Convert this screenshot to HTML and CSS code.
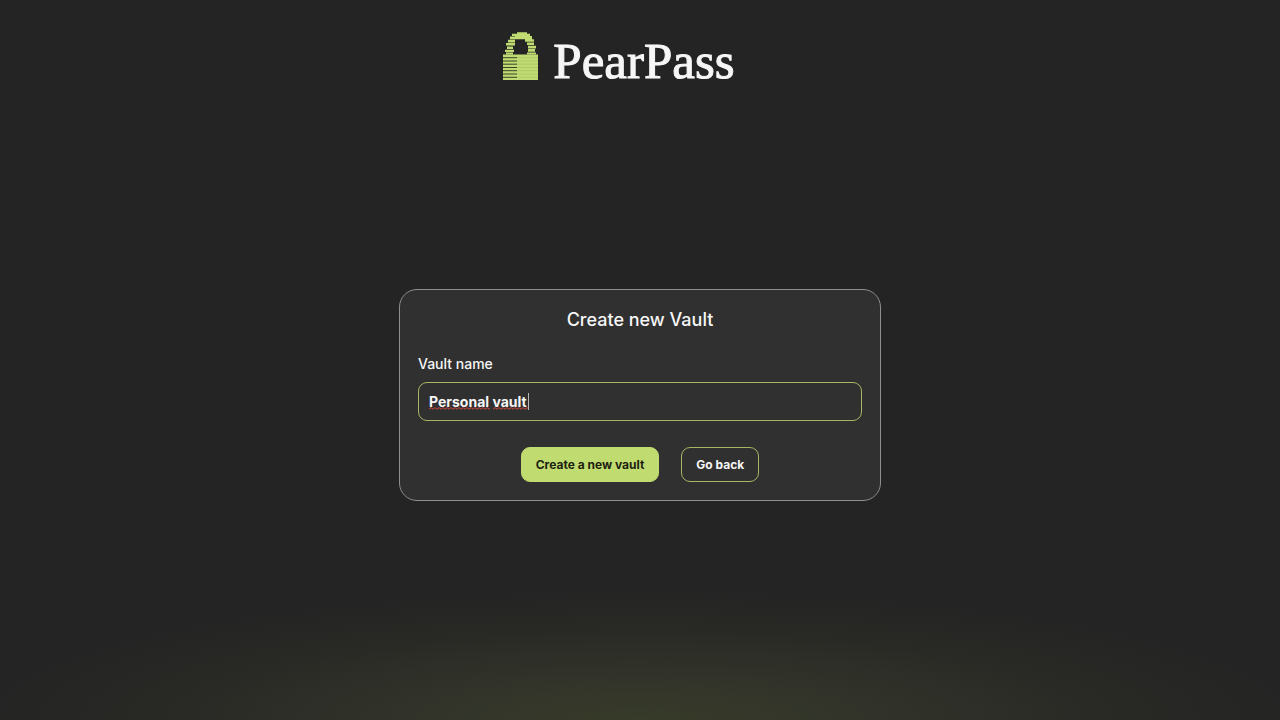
FILE: index.html
```html
<!DOCTYPE html>
<html lang="en">
<head>
<meta charset="utf-8">
<meta name="viewport" content="width=device-width, initial-scale=1">
<title>PearPass</title>
<link rel="stylesheet" href="styles.css">
</head>
<body>
<header class="header">
  <svg class="lock" viewBox="0 0 36 49" aria-hidden="true">
    <g fill="#bfdb72">
      <path d="M14 .3H24V2.2H14zM9 1.8H27V4H9zM12 4H29V5H12zM7 4.6H29V7.2H7zM5 7.8H12V10.4H5zM22 7.2H31V9.8H22zM3 11H12V13.6H3zM24 10.4H31V13H24zM4 14.4H10V17H4zM25 13.7H33V16.4H25zM2 17.8H11V20H2zM25 17.1H32V19.7H25zM3 20.6H10V22.6H3zM24 20.4H33V22.6H24z"/>
      <path d="M0 22.6H35V48H0z"/>
    </g>
    <path d="M0 25.7H14M0 29H14M0 32.2H14M0 35.5H14M0 38.7H14M0 42H14M0 45.3H14" stroke="#2c311d" stroke-width=".9"/>
    <path d="M14 25.7H35M14 29H35M14 32.2H35M14 35.5H35M14 38.7H35M14 42H35M14 45.3H35" stroke="#9fb95d" stroke-width=".5"/>
  </svg>
  <span class="wordmark">PearPass</span>
</header>
<main class="main">
  <form class="card">
    <h1 class="title">Create new Vault</h1>
    <label class="label" for="vault-name">Vault name</label>
    <div class="field">
      <input class="input" id="vault-name" type="text" value="Personal vault" spellcheck="false" autocomplete="off">
      <svg class="marks" viewBox="0 0 102 20" aria-hidden="true">
        <defs>
          <pattern id="wave" width="4" height="3" y="15" patternUnits="userSpaceOnUse">
            <path d="M0 2.2L2 .6L4 2.2" fill="none" stroke="#d0473f" stroke-width="1"/>
          </pattern>
        </defs>
        <path d="M0 15H61V18H0zM64 15H99V18H64z" fill="url(#wave)"/>
        <path d="M99.5 1V18" stroke="#b8b8b8"/>
      </svg>
    </div>
    <div class="actions">
      <button class="button primary" type="submit">Create a new vault</button>
      <button class="button" type="button">Go back</button>
    </div>
  </form>
</main>
</body>
</html>
```
FILE: styles.css
```css
* {
  box-sizing: border-box;
}

body {
  display: flex;
  flex-direction: column;
  min-height: 100vh;
  margin: 0;
  color: #f6f6f6;
  font-family: Inter, "Liberation Sans", sans-serif;
  background: radial-gradient(ellipse 52% 130px at 50% 100%, #373b28 0%, #31332a 36%, #292a25 68%, #242424 100%) #242424;
}

.header {
  display: flex;
  justify-content: center;
  align-items: flex-end;
  gap: 14px;
  padding: 32px 42px 0 0;
}

.lock {
  width: 36px;
  height: 49px;
}

.wordmark {
  font-family: "Liberation Serif", serif;
  font-size: 51px;
  line-height: 40px;
  -webkit-text-stroke: 1px #f6f6f6;
}

.main {
  display: flex;
  flex: 1;
  justify-content: center;
  align-items: center;
  padding: 0 16px 12px;
}

.card {
  width: 100%;
  max-width: 482px;
  padding: 18px;
  border: 1px solid #8f8f8f;
  border-radius: 18px;
  background: #303030;
}

.title {
  margin: 0 0 22px;
  font-size: 18px;
  font-weight: 500;
  line-height: 24px;
  text-align: center;
}

.label {
  display: block;
  margin-bottom: 8px;
  font-size: 14px;
  font-weight: 500;
  line-height: 20px;
}

.field {
  position: relative;
}

.input {
  display: block;
  width: 100%;
  height: 39px;
  padding: 0 10px;
  border: 1px solid #a3b765;
  border-radius: 9px;
  outline: none;
  background: transparent;
  color: inherit;
  font: 700 14px Inter, "Liberation Sans", sans-serif;
}

.marks {
  position: absolute;
  top: 10px;
  left: 11px;
  width: 102px;
  height: 20px;
  pointer-events: none;
}

.actions {
  display: flex;
  justify-content: center;
  gap: 22px;
  margin-top: 26px;
}

.button {
  height: 35px;
  padding: 0 14px;
  border: 1px solid #a3b765;
  border-radius: 9px;
  background: transparent;
  color: inherit;
  font: 700 12px Inter, "Liberation Sans", sans-serif;
}

.primary {
  border-color: #c0dc70;
  background: #c0dc70;
  color: #1d2210;
}
```
